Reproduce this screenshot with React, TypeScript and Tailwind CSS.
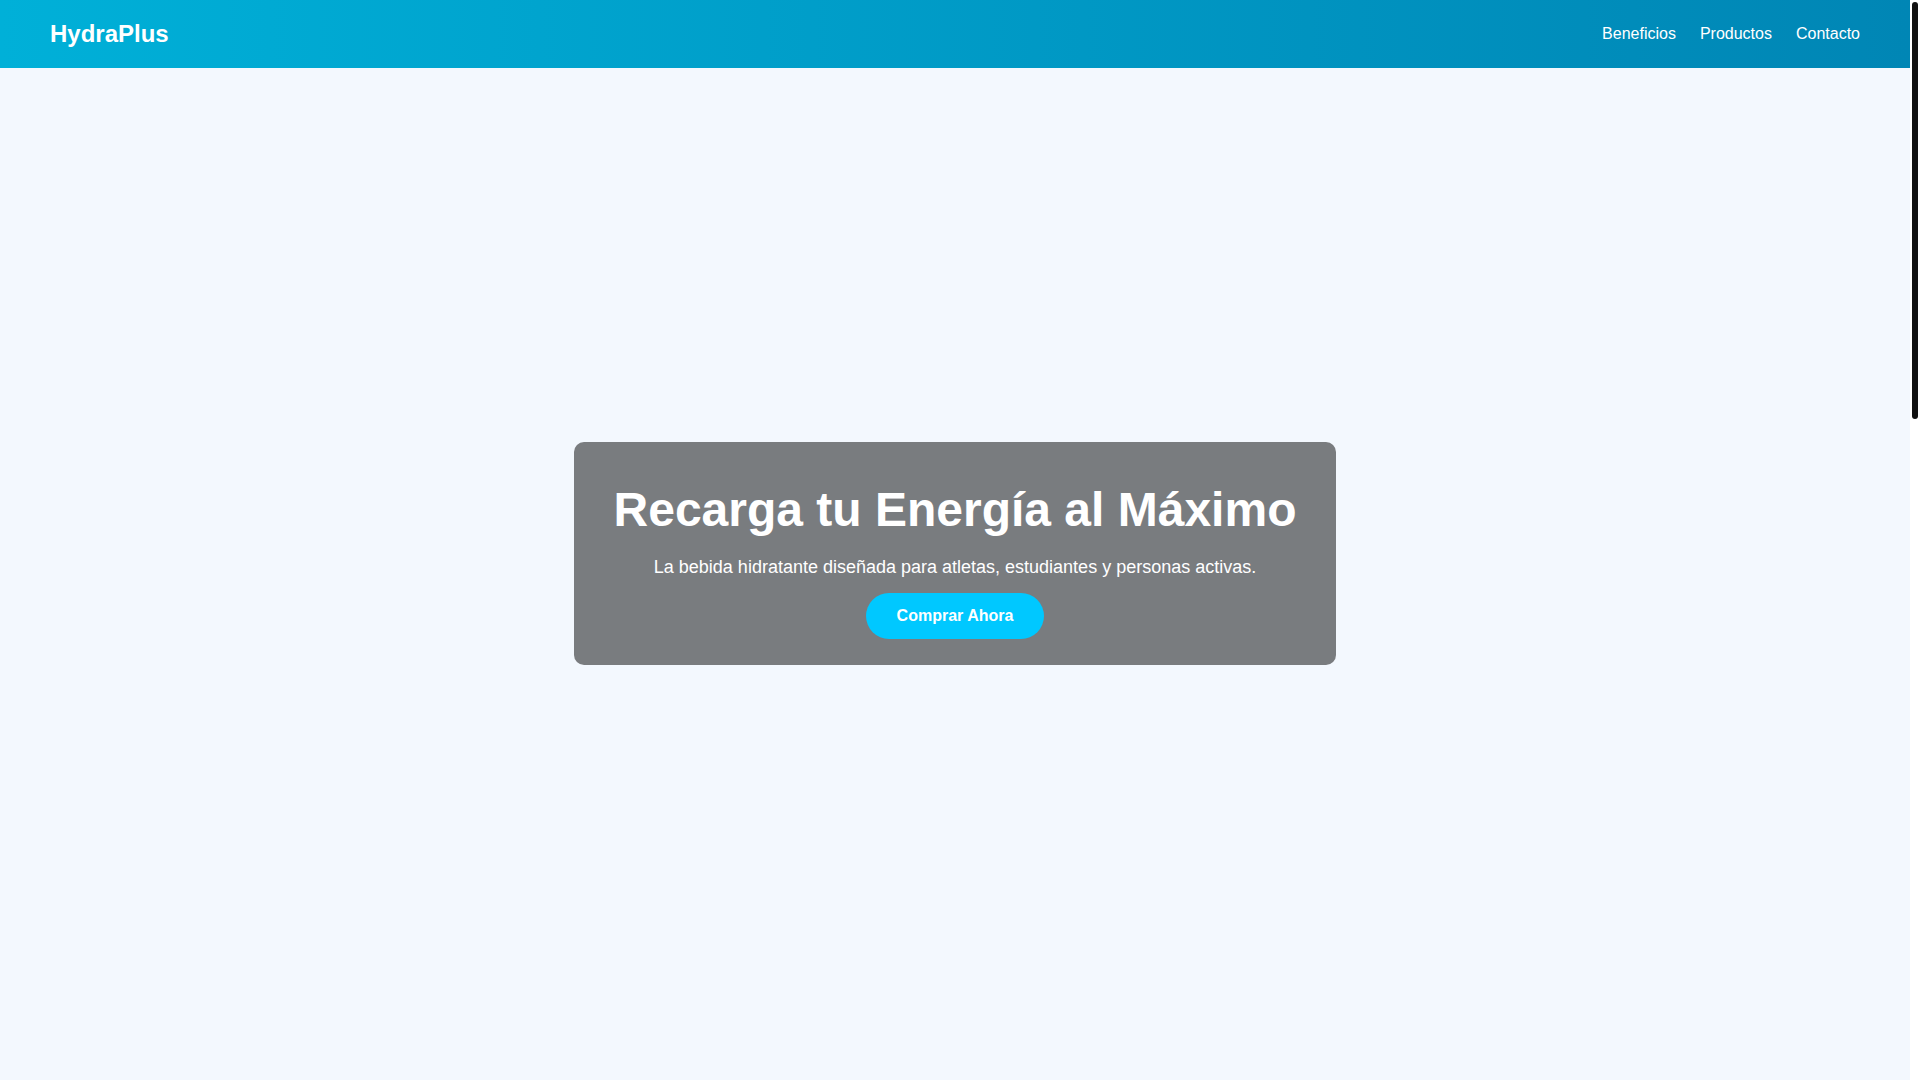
import React from "react";

function Navbar() {
  return (
    <header className="h-[68px] shrink-0 flex items-center justify-between px-[50px] bg-linear-to-r from-[#00b0d8] to-[#0086b5] text-white">
      <div className="text-[24px] font-bold leading-none">HydraPlus</div>
      <nav className="flex gap-6 text-[16px]">
        <a href="#beneficios">Beneficios</a>
        <a href="#productos">Productos</a>
        <a href="#contacto">Contacto</a>
      </nav>
    </header>
  );
}

function Hero() {
  return (
    <section className="h-[90vh] shrink-0 flex items-center justify-center pb-[1px]">
      <div className="bg-black/50 rounded-[10px] px-10 pt-10 pb-[26px] flex flex-col items-center text-center text-white">
        <h1 className="text-[48px] leading-[56px] font-bold">Recarga tu Energía al Máximo</h1>
        <p className="mt-[15px] text-[18px] leading-[28px]">
          La bebida hidratante diseñada para atletas, estudiantes y personas activas.
        </p>
        <button className="mt-3 h-[46px] px-[31px] rounded-full bg-[#00c8ff] text-white text-[16px] font-bold">
          Comprar Ahora
        </button>
      </div>
    </section>
  );
}

// page scrollbar as it shows in the picture
function ScrollTrack() {
  return (
    <aside className="w-[10px] shrink-0 bg-white pt-[2px] pl-[2px]">
      <div className="w-[6px] h-[417px] rounded-full bg-[#111]" />
    </aside>
  );
}

export default function App() {
  return (
    <div className="h-screen flex overflow-hidden font-['Liberation_Sans',Arial,sans-serif]">
      <main className="flex-1 flex flex-col bg-[#f3f8fe]">
        <Navbar />
        <Hero />
      </main>
      <ScrollTrack />
    </div>
  );
}
